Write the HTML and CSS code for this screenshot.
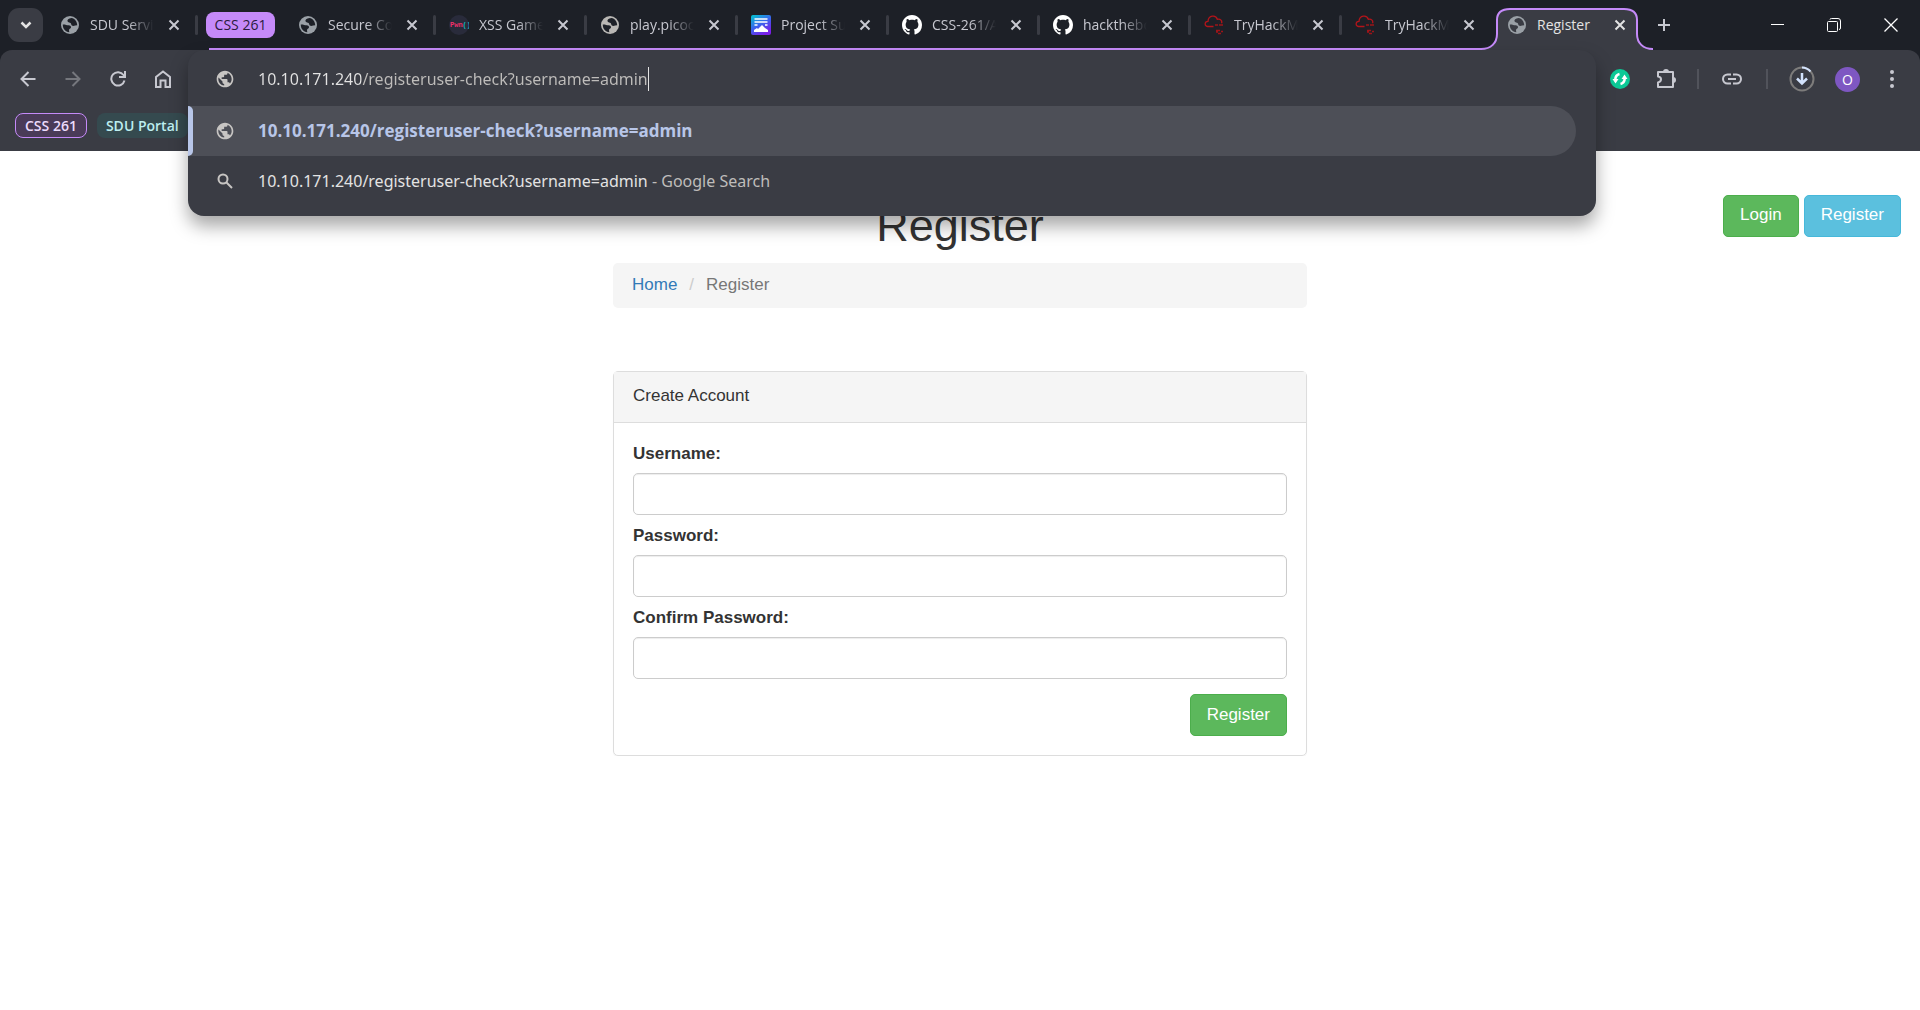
FILE: index.html
```html
<!DOCTYPE html>
<html lang="en">
<head>
<meta charset="utf-8">
<title>Register</title>
<link rel="stylesheet" href="styles.css">
</head>
<body>
<svg class="defs" aria-hidden="true">
  <symbol id="globe" viewBox="0 0 24 24"><path fill="currentColor" d="M12 2C6.480 2 2 6.480 2 12s4.480 10 10 10 10-4.480 10-10S17.520 2 12 2zm-1 17.930c-3.950-.490-7-3.850-7-7.930 0-.620.080-1.210.210-1.790L9 15v1c0 1.100.900 2 2 2v1.930zm6.900-2.540c-.260-.810-1-1.390-1.900-1.390h-1v-3c0-.550-.450-1-1-1H8v-2h2c.550 0 1-.450 1-1V7h2c1.100 0 2-.900 2-2v-.410c2.930 1.190 5 4.060 5 7.410 0 2.080-.800 3.970-2.100 5.390z"/></symbol>
  <symbol id="favglobe" viewBox="0 0 20 20"><circle cx="10" cy="10" r="9" fill="currentColor"/><path class="sea" d="M11.500 3C8.500 3.300 7 4.800 7.500 6.300C8 7.700 10 7.300 10.800 8.300C11.500 9.300 11 10.300 12.300 10.800C13.800 11.300 15.500 10.300 17.200 10.300C17.200 6.500 14.800 3.500 11.500 3ZM2.800 9.600C5 9.300 6.500 10.300 8.500 10.300C10.300 10.300 11.300 11.300 11 12.600C10.700 13.800 9 13.800 9 15.300L9.300 17.200C5.500 17 2.600 13.700 2.800 9.600Z"/></symbol>
  <symbol id="cross" viewBox="0 0 12 12"><path d="M1.500 1.500L10.500 10.500M10.500 1.500L1.500 10.500" fill="none" stroke="currentColor" stroke-width="2"/></symbol>
  <symbol id="github" viewBox="0 0 16 16"><path fill="#fff" d="M8 0C3.580 0 0 3.580 0 8c0 3.540 2.290 6.530 5.470 7.590.4.070.55-.17.55-.38 0-.19-.01-.82-.01-1.490-2.010.37-2.530-.49-2.690-.94-.09-.23-.48-.94-.82-1.130-.28-.15-.68-.52-.01-.53.63-.01 1.080.58 1.230.82.72 1.210 1.870.87 2.330.66.07-.52.28-.87.51-1.070-1.780-.2-3.640-.89-3.640-3.950 0-.87.31-1.590.82-2.150-.08-.2-.36-1.020.08-2.120 0 0 .67-.21 2.200.82.64-.18 1.320-.27 2-.27s1.360.09 2 .27c1.530-1.040 2.200-.82 2.200-.82.44 1.100.16 1.920.08 2.120.51.56.82 1.270.82 2.150 0 3.070-1.870 3.750-3.650 3.950.29.25.54.73.54 1.480 0 1.070-.01 1.930-.01 2.200 0 .21.15.46.55.38A8.010 8.010 0 0 0 16 8c0-4.420-3.580-8-8-8z"/></symbol>
  <symbol id="thm" viewBox="0 0 20 20"><path d="M9.500 11.500H3.500C.300 11 .300 6.500 4 6.300C4.500 0 12 -.300 13.300 4.300C16.500 3.500 18.500 6 17.500 8.300" fill="none" stroke="#b3141a" stroke-width="1.300"/><path d="M11 10h3M15 10h4M12 15.500h4M17 16.500h2M12 17h2M14 18.500h3" stroke="#9c1419" stroke-width="1.500"/></symbol>
</svg>

<header class="browser">
  <nav class="tabstrip" aria-label="Tabs">
    <button class="tab-search" aria-label="Search tabs"><svg width="14" height="14" viewBox="0 0 14 14"><path d="M2.500 4.500L7 9L11.500 4.500" fill="none" stroke="currentColor" stroke-width="2.500"/></svg></button>
    <div class="tab"><svg class="fav"><use href="#favglobe"/></svg><span class="title">SDU Services</span><button class="close" aria-label="Close"><svg><use href="#cross"/></svg></button></div>
    <div class="group">
      <button class="group-chip">CSS 261</button>
      <div class="tab"><svg class="fav"><use href="#favglobe"/></svg><span class="title">Secure Coding</span><button class="close" aria-label="Close"><svg><use href="#cross"/></svg></button></div>
      <div class="tab"><svg class="fav" viewBox="0 0 20 20"><circle cx="10" cy="10" r="10" fill="#292b3b"/><text x="1" y="12" class="pwn">Pwn<tspan class="parens">()</tspan></text></svg><span class="title">XSS Game</span><button class="close" aria-label="Close"><svg><use href="#cross"/></svg></button></div>
      <div class="tab"><svg class="fav warm"><use href="#favglobe"/></svg><span class="title">play.picoctf</span><button class="close" aria-label="Close"><svg><use href="#cross"/></svg></button></div>
      <div class="tab"><svg class="fav" viewBox="0 0 20 20"><defs><linearGradient id="pg" x1="0" y1="0" x2=".6" y2="1"><stop offset="0" stop-color="#00c9cf"/><stop offset=".55" stop-color="#3b62ee"/><stop offset="1" stop-color="#7a1fe8"/></linearGradient></defs><rect width="20" height="20" rx="2" fill="url(#pg)"/><path d="M3.500 4h13M3.500 7h13M3.500 10h3M14 10h2.500" stroke="#fff" stroke-width="1.500"/><path d="M3 17v-2l3-2 1 1 4-4 3 3 3 2v2z" fill="#fff"/></svg><span class="title">Project Submission</span><button class="close" aria-label="Close"><svg><use href="#cross"/></svg></button></div>
      <div class="tab"><svg class="fav"><use href="#github"/></svg><span class="title">CSS-261/Assign</span><button class="close" aria-label="Close"><svg><use href="#cross"/></svg></button></div>
      <div class="tab"><svg class="fav"><use href="#github"/></svg><span class="title">hackthebox</span><button class="close" aria-label="Close"><svg><use href="#cross"/></svg></button></div>
      <div class="tab"><svg class="fav"><use href="#thm"/></svg><span class="title">TryHackMe</span><button class="close" aria-label="Close"><svg><use href="#cross"/></svg></button></div>
      <div class="tab last"><svg class="fav"><use href="#thm"/></svg><span class="title">TryHackMe</span><button class="close" aria-label="Close"><svg><use href="#cross"/></svg></button></div>
      <div class="tab active">
        <svg class="outline" width="172" height="44" viewBox="0 0 172 44" aria-hidden="true"><path d="M0 43C10 43 16 37 16 28V14C16 6 21 3 29 3H143C151 3 156 6 156 14V28C156 37 162 43 172 43V44H0Z" fill="#3a3c44"/><path d="M0 43C10 43 16 37 16 28V14C16 6 21 3 29 3H143C151 3 156 6 156 14V28C156 37 162 43 172 43" fill="none" stroke="#c58af9" stroke-width="2"/></svg>
        <svg class="fav"><use href="#favglobe"/></svg><span class="title">Register</span><button class="close" aria-label="Close"><svg><use href="#cross"/></svg></button>
      </div>
    </div>
    <button class="new-tab" aria-label="New tab"><svg width="14" height="14" viewBox="0 0 14 14"><path d="M7 1V13M1 7H13" stroke="currentColor" stroke-width="2"/></svg></button>
    <div class="window-controls">
      <button aria-label="Minimize"><svg width="14" height="14" viewBox="0 0 14 14"><path d="M1 6.500H14" stroke="#fff"/></svg></button>
      <button aria-label="Restore"><svg width="14" height="14" viewBox="0 0 14 14" fill="none" stroke="#fff"><rect x=".5" y="3.500" width="10" height="10" rx="1"/><path d="M3 1.500Q3 .500 4.500 .500H11Q13.500 .500 13.500 3V10Q13.500 11.500 12 11.500"/></svg></button>
      <button aria-label="Close window"><svg width="14" height="14" viewBox="0 0 14 14"><path d="M.5 .5L13.500 13.500M13.500 .5L.5 13.500" stroke="#fff" stroke-width="1.300"/></svg></button>
    </div>
  </nav>

  <div class="chrome">
    <div class="toolbar">
      <div class="nav-buttons">
        <button aria-label="Back"><svg width="16" height="16" viewBox="0 0 16 16"><path d="M15.500 8H2M8.500 1L1.500 8L8.500 15" fill="none" stroke="currentColor" stroke-width="2"/></svg></button>
        <button class="dim" aria-label="Forward"><svg width="16" height="16" viewBox="0 0 16 16"><path d="M.5 8H14M7.500 1L14.500 8L7.500 15" fill="none" stroke="currentColor" stroke-width="2"/></svg></button>
        <button aria-label="Reload"><svg width="16" height="16" viewBox="0 0 16 16"><path d="M14.500 9.500A6.700 6.700 0 1 1 13.500 4L15 5.800M15 0V6H9" fill="none" stroke="currentColor" stroke-width="2"/></svg></button>
        <button aria-label="Home"><svg width="16" height="18" viewBox="0 0 16 18"><path d="M1 17V7L8 1.500L15 7V17H10.500V10.500H5.500V17Z" fill="none" stroke="currentColor" stroke-width="2"/></svg></button>
      </div>
      <div class="tools">
        <button aria-label="Extension"><svg width="20" height="20" viewBox="0 0 20 20"><circle cx="10" cy="10" r="10" fill="#0cc996"/><path d="M9.500 5Q5.500 6 5.300 10.500M10.500 15Q14.500 14 14.700 9.500" fill="none" stroke="#fff" stroke-width="2.600"/><path d="M2.500 10H8.500L5.500 14.500ZM11.500 10H17.500L14.500 5.500Z" fill="#fff"/></svg></button>
        <button aria-label="Extensions"><svg width="20" height="20" viewBox="0 0 20 20"><path d="M2 3H17V18H2V13.500C6 12.500 6 8 2 7.500Z" fill="none" stroke="currentColor" stroke-width="2" stroke-linejoin="round"/><path d="M7 3A3 3 0 0 1 13 3ZM17 8A3 3 0 0 1 17 14Z" fill="currentColor"/></svg></button>
        <span class="rule"></span>
        <button class="link-tool" aria-label="Copy link"><svg width="20" height="12" viewBox="0 0 20 12"><path d="M9 1.500H5.500A4.500 4.500 0 0 0 5.500 10.500H9M11 1.500H14.500A4.500 4.500 0 0 1 14.500 10.500H11M6 6H14" fill="none" stroke="currentColor" stroke-width="2"/></svg></button>
        <span class="rule"></span>
        <button aria-label="Downloads"><svg width="26" height="26" viewBox="0 0 26 26" fill="none"><circle cx="13" cy="13" r="11.500" stroke="#7d7c7b" stroke-width="2"/><path d="M13 1.500A11.500 11.500 0 0 1 21.500 5.500" stroke="#d3e3fd" stroke-width="2"/><path d="M13 7V17.500M8 12.500L13 17.500L18 12.500" stroke="#d3e3fd" stroke-width="2.500"/></svg></button>
        <button class="avatar" aria-label="Profile">O</button>
        <button aria-label="Menu"><svg width="4" height="18" viewBox="0 0 4 18" fill="currentColor"><circle cx="2" cy="2" r="2"/><circle cx="2" cy="9" r="2"/><circle cx="2" cy="16" r="2"/></svg></button>
      </div>
    </div>
    <div class="bookmarks">
      <button class="bookmark purple">CSS 261</button>
      <button class="bookmark teal">SDU Portal</button>
    </div>
    <div class="omnibox">
      <label class="row"><svg class="row-icon"><use href="#globe"/></svg><span class="field"><input type="text" class="url" aria-label="Address" spellcheck="false" value="10.10.171.240/registeruser-check?username=admin"><span class="caret"></span></span></label>
      <a href="#" class="row selected"><svg class="row-icon"><use href="#globe"/></svg><span>10.10.171.240/registeruser-check?username=admin</span></a>
      <a href="#" class="row"><svg class="row-icon" viewBox="0 0 20 20"><circle cx="8" cy="8" r="4.500" fill="none" stroke="currentColor" stroke-width="2"/><path d="M11.500 11.500L17 17" stroke="currentColor" stroke-width="2"/></svg><span>10.10.171.240/registeruser-check?username=admin<span class="muted"> - Google Search</span></span></a>
    </div>
  </div>
</header>

<main class="page">
  <div class="page-head">
    <h1>Register</h1>
    <div class="account">
      <a href="#" class="btn green">Login</a>
      <a href="#" class="btn blue">Register</a>
    </div>
  </div>
  <div class="content">
    <ol class="breadcrumb">
      <li><a href="#">Home</a></li>
      <li class="current">Register</li>
    </ol>
    <form class="panel">
      <div class="panel-heading">Create Account</div>
      <div class="panel-body">
        <div class="form-row"><label for="username">Username:</label><input id="username" type="text"></div>
        <div class="form-row"><label for="password">Password:</label><input id="password" type="password"></div>
        <div class="form-row"><label for="confirm">Confirm Password:</label><input id="confirm" type="password"></div>
        <button type="button" class="btn green submit">Register</button>
      </div>
    </form>
  </div>
</main>
</body>
</html>
```
FILE: styles.css
```css
* { box-sizing: border-box; }
body { margin: 0; background: #fff; color: #333; font: 17px/25px "Liberation Sans", Arial, sans-serif; }
button { border: 0; padding: 0; background: none; color: inherit; font: inherit; }
a { text-decoration: none; }
.defs { position: absolute; width: 0; height: 0; }

/* Browser frame */
.browser { position: relative; z-index: 1; background: #1d2027; color: #c7c8d0; font: 14px/20px "Open Sans", "Noto Sans", sans-serif; }
.browser svg { display: block; flex: none; }
.tabstrip { display: flex; align-items: center; height: 50px; padding-left: 8px; }
.tab-search { display: grid; place-items: center; flex: none; width: 35px; height: 34px; margin-right: 4px; border-radius: 11px; background: #3a3c44; color: #e3e3e3; }
.tab { --tab: #1d2027; position: relative; display: flex; align-items: center; flex: none; width: 151px; height: 50px; padding-left: 13px; }
.tab::after { content: ""; width: 3px; height: 20px; margin-left: auto; border-radius: 2px; background: #3a3c44; }
.tab.last::after, .tab.active::after { display: none; }
.tab.last { width: 152px; }
.fav { width: 20px; height: 20px; margin-right: 10px; color: #9aa0a6; }
.fav.warm { color: #b9b7b4; }
.sea { fill: var(--tab); }
.pwn { fill: #f0306a; font: bold 7px "Liberation Mono", monospace; }
.parens { fill: #12b5bd; }
.title { width: 64px; overflow: hidden; white-space: nowrap; -webkit-mask-image: linear-gradient(90deg, #000 60%, transparent); mask-image: linear-gradient(90deg, #000 60%, transparent); }
.close { margin-left: 14px; }
.close svg { width: 12px; height: 12px; }
.group { position: relative; display: flex; align-items: center; flex: none; margin-left: 8px; }
.group::before { content: ""; position: absolute; left: 3px; right: 158px; bottom: 0; height: 2px; background: #c58af9; }
.group-chip { flex: none; width: 69px; height: 26px; margin-right: 10px; border-radius: 8px; background: #c58af9; color: #2a1b3d; line-height: 24px; }
.tab.active { --tab: #3a3c44; width: 145px; color: #e3e3e3; }
.tab.active .title { -webkit-mask-image: none; mask-image: none; }
.tab.active .fav, .tab.active .title, .tab.active .close { position: relative; }
.tab.active .close { margin-left: 13px; }
.outline { position: absolute; left: -13px; bottom: 0; }
.new-tab { margin-left: 18px; }
.window-controls { display: flex; align-items: center; gap: 43px; margin-left: auto; padding-right: 22px; }

.chrome { position: relative; border-radius: 12px 12px 0 0; background: #3a3c44; }
.toolbar { display: flex; justify-content: space-between; align-items: center; height: 58px; padding: 0 26px 0 20px; }
.nav-buttons { display: flex; gap: 29px; align-items: center; }
.dim { color: #75777d; }
.tools { display: flex; align-items: center; gap: 26px; }
.rule { width: 2px; height: 20px; margin: 0 -5px; background: #51535b; }
.link-tool { margin: 0 3px 0 2px; }
.tools .avatar { width: 25px; height: 25px; margin: 0 4px 0 -6px; border-radius: 50%; background: #7e57c2; color: #fff; line-height: 25px; }
.bookmarks { display: flex; gap: 10px; padding: 5px 15px 13px; }
.bookmark { height: 25px; padding: 0 9px; border-radius: 8px; font-weight: 600; line-height: 22px; }
.purple { border: 1px solid #c58af9; background: #4a3b58; color: #ecdcfc; }
.teal { background: #354a4f; color: #bdeef0; }

.omnibox { position: absolute; top: 0; left: 188px; right: 324px; padding-bottom: 10px; border-radius: 16px; background: #3a3c44; box-shadow: 0 10px 18px rgba(0, 0, 0, .35); font: 16px/24px "Noto Sans", "Open Sans", sans-serif; }
.row { position: relative; display: flex; align-items: center; gap: 23px; height: 50px; padding-left: 27px; color: #e3e3e3; }
label.row { height: 58px; margin-bottom: -2px; }
.row-icon { width: 20px; height: 20px; color: #c7c5c3; }
.field { display: flex; align-items: center; }
.url { field-sizing: content; padding: 0; border: 0; outline: 0; background: linear-gradient(90deg, #e3e3e3 103px, #bfbdbb 103px); -webkit-background-clip: text; background-clip: text; color: transparent; font: inherit; }
.caret { width: 1px; height: 24px; background: #e3e3e3; }
.selected { margin-right: 20px; border-radius: 0 25px 25px 0; background: #4d4f57; color: #b8c6e8; font: 700 17px/24px "Open Sans", "Noto Sans", sans-serif; }
.selected::before { content: ""; position: absolute; left: 0; top: 0; bottom: 0; width: 5px; border-radius: 0 5px 5px 0; background: #b8c6e8; }
.muted { color: #bfbdbb; }

/* Register page */
.page-head { display: grid; grid-template-columns: 1fr auto 1fr; align-items: start; padding: 44px 19px 0; }
h1 { grid-column: 2; margin: 6px 0 12px; font-size: 45px; font-weight: 400; line-height: 50px; }
.account { display: flex; justify-content: flex-end; gap: 5px; }
.btn { display: inline-block; height: 42px; padding: 6px 16px 8px; border: 1px solid; border-radius: 5px; color: #fff; line-height: 25px; }
.green { border-color: #4cae4c; background: #5cb85c; }
.blue { border-color: #46b8da; background: #5bc0de; }
.content { max-width: 694px; margin: 0 auto; }
.breadcrumb { display: flex; margin: 0 0 63px; padding: 9px 19px 11px; border-radius: 5px; background: #f5f5f5; list-style: none; }
.breadcrumb a { color: #337ab7; }
.current { color: #777; }
.current::before { content: "/"; padding: 0 12px; color: #ccc; }
.panel { border: 1px solid #ddd; border-radius: 5px; box-shadow: 0 1px 1px rgba(0, 0, 0, .05); }
.panel-heading { padding: 11px 19px 14px; border-bottom: 1px solid #ddd; background: #f5f5f5; }
.panel-body { display: flex; flex-direction: column; gap: 8px; padding: 18px 19px 19px; }
.form-row { display: flex; flex-direction: column; gap: 7px; }
.form-row label { font-weight: 700; }
.form-row input { width: 100%; height: 42px; padding: 7px 15px; border: 1px solid #ccc; border-radius: 5px; background: #fff; box-shadow: inset 0 1px 1px rgba(0, 0, 0, .075); font: inherit; }
.submit { align-self: flex-end; margin-top: 7px; }
```
